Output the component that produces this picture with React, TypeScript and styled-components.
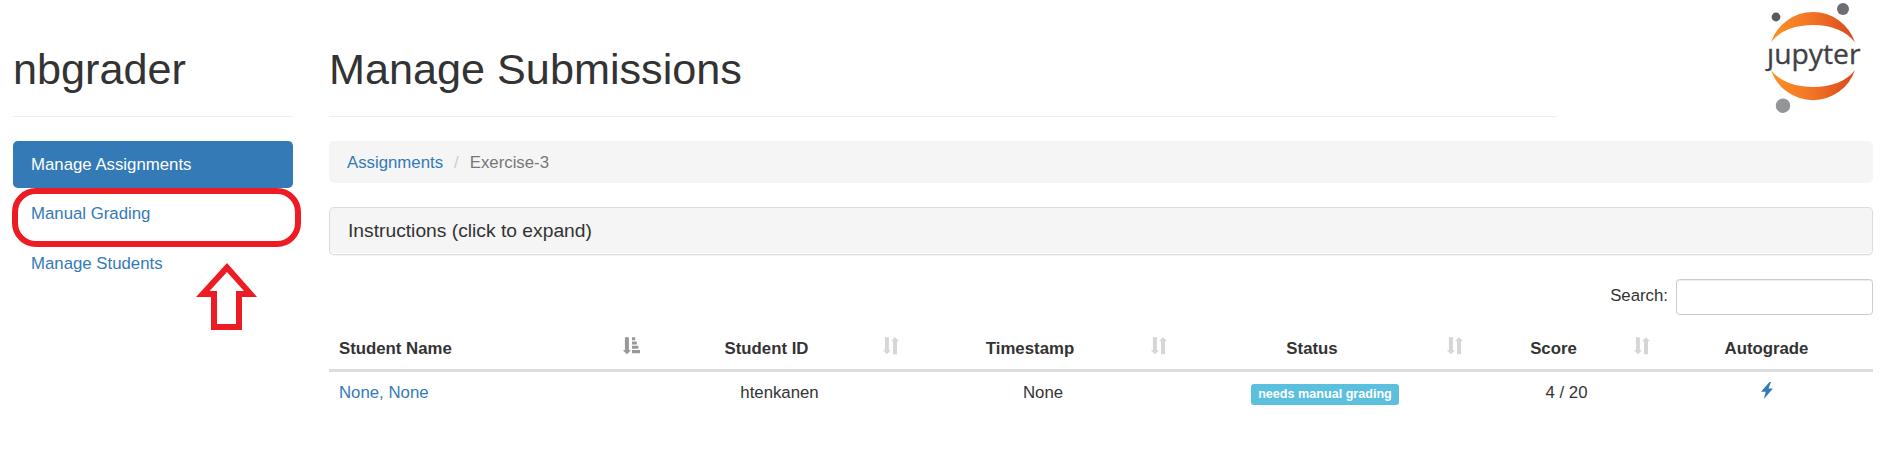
import React from "react";
import styled, { createGlobalStyle } from "styled-components";

const GlobalStyle = createGlobalStyle`
  * { box-sizing: border-box; }
  body {
    margin: 0;
    background: #fff;
    color: #333;
    font: 16.8px/23px "Liberation Sans", Arial, sans-serif;
    overflow: hidden;
  }
`;

const Page = styled.div`
  display: flex;
  gap: 36px;
  height: 449px;
  padding: 0 10px 0 13px;
`;
const Sidebar = styled.aside`
  position: relative;
  width: 280px;
  flex: none;
`;
const Main = styled.main`
  flex: 1;
  min-width: 0;
`;
const TitleRow = styled.div`
  display: flex;
  justify-content: space-between;
  height: 141px;
`;
const TitleBlock = styled.header<{ $width: number }>`
  width: ${(p) => p.$width}px;
  height: 117px;
  padding-top: 46px;
  border-bottom: 1px solid #eee;
`;
const Title = styled.h1`
  margin: 0;
  font-size: 43.2px;
  line-height: 47px;
  font-weight: 400;
`;
const Logo = styled.svg`
  flex: none;
  width: 133px;
  height: 120px;
  margin-right: -10px;
`;
const Nav = styled.nav`
  display: flex;
  flex-direction: column;
  gap: 3px;
`;
const NavItem = styled.a<{ $active?: boolean }>`
  height: 47px;
  padding: ${(p) => (p.$active ? 12 : 11)}px 18px;
  border-radius: 4.8px;
  color: ${(p) => (p.$active ? "#fff" : "#337ab7")};
  background: ${(p) => (p.$active ? "#337ab7" : "transparent")};
`;
const Highlight = styled.div`
  position: absolute;
  left: -1px;
  top: 188px;
  width: 289px;
  height: 59px;
  border: 6px solid #ed1c24;
  border-radius: 24px;
`;
const Arrow = styled.svg`
  position: absolute;
  left: 183px;
  top: 263px;
  width: 61px;
  height: 67px;
`;
const Breadcrumb = styled.div`
  display: flex;
  height: 42px;
  padding: 10px 18px 9px;
  border-radius: 4.8px;
  background: #f5f5f5;
  color: #777;
`;
const Separator = styled.span`
  padding: 0 11px;
  color: #ccc;
`;
const Link = styled.a`
  color: #337ab7;
`;
const Panel = styled.section`
  height: 48px;
  margin-top: 24px;
  padding: 12px 18px;
  border: 1px solid #ddd;
  border-radius: 4.8px;
  background: #f5f5f5;
  box-shadow: inset 0 -1px 0 #fff, 0 1px 1px rgba(0, 0, 0, 0.05);
  font-size: 19.25px;
  line-height: 22px;
`;
const SearchRow = styled.label`
  display: flex;
  justify-content: flex-end;
  gap: 8px;
  margin-top: 24px;
  line-height: 34px;
`;
const SearchInput = styled.input`
  width: 197px;
  height: 36px;
  border: 1px solid #ccc;
  border-radius: 3.6px;
  box-shadow: inset 0 1px 1px rgba(0, 0, 0, 0.075);
  background: #fff;
`;
const Table = styled.table`
  width: 1544px;
  margin-top: 7px;
  border-collapse: separate;
  border-spacing: 0;
  table-layout: fixed;
`;
const HeadCell = styled.th<{ $left?: boolean; $sortable?: boolean }>`
  position: relative;
  height: 50px;
  padding: 5px ${(p) => (p.$sortable ? 36 : 10)}px 0 10px;
  border-bottom: 3px solid #ddd;
  text-align: ${(p) => (p.$left ? "left" : "center")};
  vertical-align: middle;
  font-weight: 700;
`;
const Cell = styled.td<{ $left?: boolean }>`
  height: 43px;
  padding: 9px 10px 10px;
  text-align: ${(p) => (p.$left ? "left" : "center")};
  vertical-align: top;
`;
const SortIcon = styled.svg<{ $on?: boolean }>`
  position: absolute;
  right: ${(p) => (p.$on ? 10 : 9)}px;
  top: 15px;
  width: 18px;
  height: 18px;
  fill: ${(p) => (p.$on ? "#999" : "#d6d6d6")};
`;
const Badge = styled.span`
  display: inline-block;
  height: 21px;
  margin-top: 3px;
  padding: 0 7.5px;
  border-radius: 3px;
  background: #5bc0de;
  color: #fff;
  font-size: 12.6px;
  font-weight: 700;
  line-height: 20px;
  vertical-align: top;
`;
const Bolt = styled.svg`
  width: 12px;
  height: 17px;
  margin-top: 1px;
  vertical-align: top;
  fill: #337ab7;
`;

const columns = [
  { label: "Student Name", width: 321, left: true, sortable: true, sorted: true },
  { label: "Student ID", width: 259, sortable: true },
  { label: "Timestamp", width: 268, sortable: true },
  { label: "Status", width: 296, sortable: true },
  { label: "Score", width: 187, sortable: true },
  { label: "Autograde", width: 213 },
];

function Sort({ sorted }: { sorted?: boolean }) {
  return (
    <SortIcon $on={sorted} viewBox="0 0 18 18">
      <path d="M2.900 .3h4v13h2.100l-4.100 4-4.100-4h2.100z" />
      {sorted ? (
        <path d="M10 .3h3.200v3h-3.200zM10 4.500h4.800v3h-4.800zM10 8.700h6.300v3h-6.300zM10 13h8v3.300h-8z" />
      ) : (
        <path d="M11 17.300h4v-13h2.100l-4.100-4-4.100 4h2.100z" />
      )}
    </SortIcon>
  );
}

function JupyterLogo() {
  return (
    <Logo viewBox="0 0 133 120" role="img" aria-label="jupyter">
      <defs>
        <linearGradient id="planet" gradientUnits="userSpaceOnUse" x1="21" y1="0" x2="105" y2="0">
          <stop offset="0" stopColor="#f99224" />
          <stop offset=".45" stopColor="#f37726" />
          <stop offset="1" stopColor="#d8481f" />
        </linearGradient>
      </defs>
      <g fill="url(#planet)">
        <path d="M21 42.500A44.200 44.200 0 0 1 105 42.500C97 31 81 25 63 25S29 31 21 42.500Z" />
        <path d="M21 70A44.300 44.300 0 0 0 105 70C97 81 81 87 63 87S29 81 21 70Z" />
      </g>
      <circle cx="26" cy="17" r="4.400" fill="#58595b" />
      <circle cx="93" cy="9" r="6" fill="#6d6e71" />
      <circle cx="33" cy="105.700" r="7.200" fill="#939598" />
      <text
        x="17"
        y="64"
        textLength="93.500"
        lengthAdjust="spacingAndGlyphs"
        fontFamily="'Open Sans', 'Noto Sans', sans-serif"
        fontSize="27.500"
        fill="#414042"
        stroke="#414042"
        strokeWidth=".3"
      >
        ȷupyter
      </text>
    </Logo>
  );
}

export default function App() {
  return (
    <Page>
      <GlobalStyle />
      <Sidebar>
        <TitleRow>
          <TitleBlock $width={280}>
            <Title>nbgrader</Title>
          </TitleBlock>
        </TitleRow>
        <Nav>
          <NavItem $active>Manage Assignments</NavItem>
          <NavItem>Manual Grading</NavItem>
          <NavItem>Manage Students</NavItem>
        </Nav>
        <Highlight />
        <Arrow viewBox="0 0 61 67">
          <path
            d="M31 0L61 34H46V67H15V34H0ZM31 9L13.500 28H21V61H40V28H48Z"
            fill="#ed1c24"
            fillRule="evenodd"
          />
        </Arrow>
      </Sidebar>
      <Main>
        <TitleRow>
          <TitleBlock $width={1227}>
            <Title>Manage Submissions</Title>
          </TitleBlock>
          <JupyterLogo />
        </TitleRow>
        <Breadcrumb>
          <Link>Assignments</Link>
          <Separator>/</Separator>
          <span>Exercise-3</span>
        </Breadcrumb>
        <Panel>Instructions (click to expand)</Panel>
        <SearchRow>
          <span>Search:</span>
          <SearchInput type="search" />
        </SearchRow>
        <Table>
          <colgroup>
            {columns.map((c) => (
              <col key={c.label} width={c.width} />
            ))}
          </colgroup>
          <thead>
            <tr>
              {columns.map((c) => (
                <HeadCell key={c.label} $left={c.left} $sortable={c.sortable}>
                  {c.label}
                  {c.sortable && <Sort sorted={c.sorted} />}
                </HeadCell>
              ))}
            </tr>
          </thead>
          <tbody>
            <tr>
              <Cell $left>
                <Link>None, None</Link>
              </Cell>
              <Cell>htenkanen</Cell>
              <Cell>None</Cell>
              <Cell>
                <Badge>needs manual grading</Badge>
              </Cell>
              <Cell>4 / 20</Cell>
              <Cell>
                <Bolt viewBox="0 0 12 17">
                  <path d="M8.500 0L0 9.800H4.700L2.800 17L12 6.500H7.500L10 0Z" />
                </Bolt>
              </Cell>
            </tr>
          </tbody>
        </Table>
      </Main>
    </Page>
  );
}
